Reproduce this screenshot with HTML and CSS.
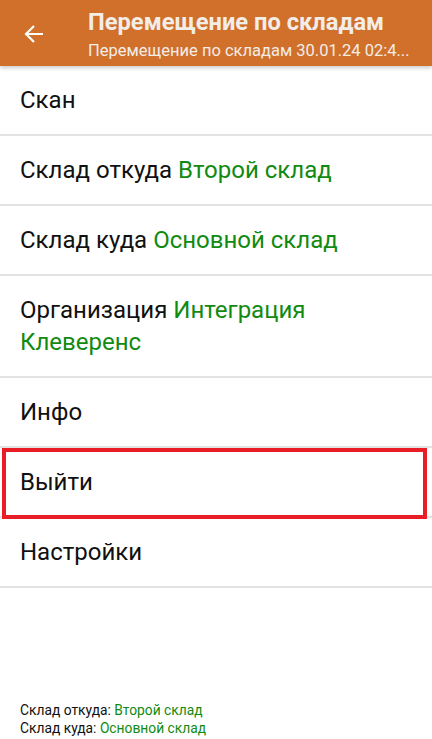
FILE: index.html
```html
<!DOCTYPE html>
<html lang="ru">
<head>
    <meta charset="UTF-8">
    <meta name="viewport" content="width=device-width, initial-scale=1.0">
    <title>Перемещение по складам</title>
    <link rel="stylesheet" href="styles.css">
</head>
<body>
    <div class="app">
        <header class="toolbar">
            <div class="back">
                <svg width="20" height="20" viewBox="0 0 20 20">
                    <path d="M19 10H2M10 2L2 10L10 18" fill="none" stroke="#fff" stroke-width="2.2"/>
                </svg>
            </div>
            <div class="titles">
                <div class="title">Перемещение по складам</div>
                <div class="subtitle">Перемещение по складам 30.01.24 02:4...</div>
            </div>
        </header>
        <ul class="menu">
            <li class="item">Скан</li>
            <li class="item">Склад откуда <span class="value">Второй склад</span></li>
            <li class="item">Склад куда <span class="value">Основной склад</span></li>
            <li class="item">Организация <span class="value">Интеграция Клеверенс</span></li>
            <li class="item">Инфо</li>
            <li class="item marked">Выйти</li>
            <li class="item">Настройки</li>
        </ul>
        <footer class="summary">
            <div>Склад откуда: <span class="value">Второй склад</span></div>
            <div>Склад куда: <span class="value">Основной склад</span></div>
        </footer>
    </div>
</body>
</html>
```

FILE: styles.css
```css
body {
    margin: 0;
    padding: 0;
    background-color: #fff;
    font-family: Roboto, "Noto Sans", sans-serif;
    color: #111;
}

.app {
    width: 432px;
    height: 739px;
    display: flex;
    flex-direction: column;
    overflow: hidden;
}

.toolbar {
    height: 66px;
    flex-shrink: 0;
    background-color: #d0702b;
    display: flex;
    box-shadow: 0 2px 4px rgba(0, 0, 0, 0.2);
    position: relative;
    z-index: 1;
}

.back {
    width: 88px;
    flex-shrink: 0;
    display: flex;
    align-items: center;
    padding-left: 24px;
    box-sizing: border-box;
    padding-top: 1px;
}

.titles {
    color: #f3ede8;
    white-space: nowrap;
    padding-top: 8px;
    min-width: 0;
}

.title {
    font-size: 23.7px;
    font-weight: bold;
    line-height: 28px;
}

.subtitle {
    font-size: 16.5px;
    line-height: 22px;
    margin-top: 4px;
}

.menu {
    list-style: none;
    margin: 0;
    padding: 0;
}

.item {
    font-size: 24px;
    line-height: 32px;
    padding: 18px 20px;
    border-bottom: 2px solid #e3e3e3;
    position: relative;
}

.value {
    color: #118a11;
}

.marked::after {
    content: "";
    position: absolute;
    top: 0;
    left: 2px;
    right: 5px;
    bottom: -3px;
    border: 4px solid #e81d25;
}

.summary {
    margin-top: auto;
    padding: 0 20px 2px;
    font-size: 13.8px;
    line-height: 18px;
}
```
